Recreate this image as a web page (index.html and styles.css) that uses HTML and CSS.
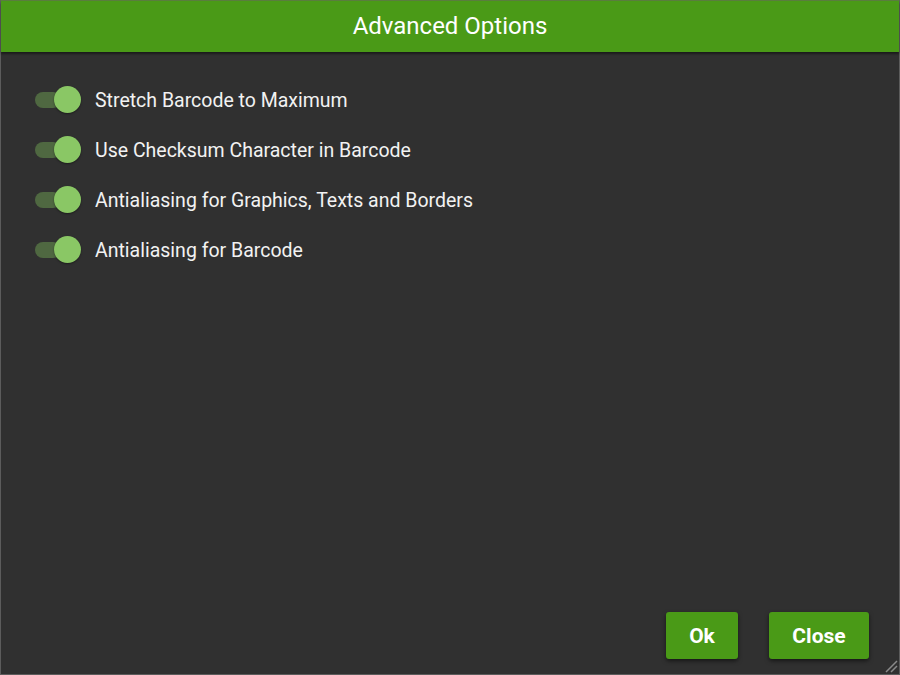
FILE: index.html
```html
<!DOCTYPE html>
<html lang="en">
<head>
    <meta charset="UTF-8">
    <title>Advanced Options</title>
    <link rel="stylesheet" href="styles.css">
</head>
<body>
    <div class="dialog">
        <div class="dialog-title">Advanced Options</div>
        <div class="dialog-body">
            <label class="option"><span class="toggle"><span class="knob"></span></span>Stretch Barcode to Maximum</label>
            <label class="option"><span class="toggle"><span class="knob"></span></span>Use Checksum Character in Barcode</label>
            <label class="option"><span class="toggle"><span class="knob"></span></span>Antialiasing for Graphics, Texts and Borders</label>
            <label class="option"><span class="toggle"><span class="knob"></span></span>Antialiasing for Barcode</label>
        </div>
        <div class="dialog-buttons">
            <button class="btn btn-ok">Ok</button>
            <button class="btn btn-close">Close</button>
        </div>
        <svg class="grip" width="14" height="14" viewBox="0 0 14 14">
            <path d="M2 13 L13 2 M7 13 L13 7" stroke="#8a8a8a" stroke-width="1.5" fill="none"/>
        </svg>
    </div>
</body>
</html>
```

FILE: styles.css
```css
html, body { margin: 0; padding: 0; }
body { width: 900px; height: 675px; background: #303030; font-family: Roboto, "Liberation Sans", sans-serif; overflow: hidden; }
.dialog { position: relative; box-sizing: border-box; width: 900px; height: 675px; border: 1px solid #5c5c5c; border-top-color: #5a7d3e; background: #303030; display: flex; flex-direction: column; }
.dialog-title { height: 51px; background: #4a9a17; color: #fff; font-size: 24px; text-align: center; line-height: 50px; box-shadow: 0 2px 2px rgba(0,0,0,0.45); z-index: 1; }
.dialog-body { flex: 1; padding: 34px 0 0 34px; display: flex; flex-direction: column; gap: 22px; }
.option { display: flex; align-items: center; color: #f2f2f2; font-size: 19.5px; height: 28px; }
.toggle { position: relative; width: 26px; height: 16px; border-radius: 8px; background: #4f6841; margin-right: 34px; }
.knob { position: absolute; left: 19px; top: -6px; width: 27px; height: 27px; border-radius: 50%; background: #8ac765; box-shadow: 0 1px 2px rgba(0,0,0,0.4); }
.dialog-buttons { display: flex; justify-content: flex-end; gap: 31px; padding: 0 30px 15px 0; }
.btn { height: 47px; border: none; border-radius: 3px; background: #4a9a17; color: #fff; font-family: Roboto, "Liberation Sans", sans-serif; font-weight: bold; font-size: 21px; box-shadow: 0 2px 4px rgba(0,0,0,0.55); }
.btn-ok { width: 72px; }
.btn-close { width: 100px; }
.grip { position: absolute; right: 1px; bottom: 1px; }
```
